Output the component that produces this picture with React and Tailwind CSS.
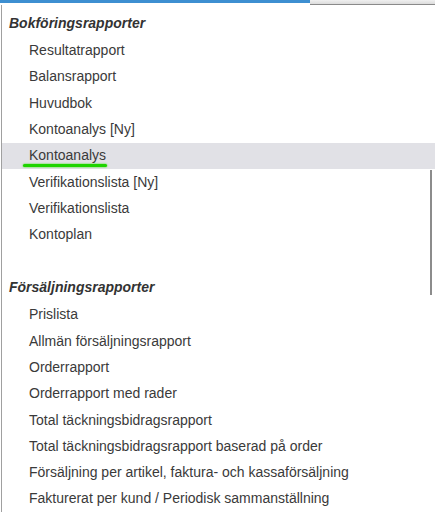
import React from 'react';

const groups = [
    {
        title: 'Bokföringsrapporter',
        items: [
            'Resultatrapport',
            'Balansrapport',
            'Huvudbok',
            'Kontoanalys [Ny]',
            'Kontoanalys',
            'Verifikationslista [Ny]',
            'Verifikationslista',
            'Kontoplan',
        ],
    },
    {
        title: 'Försäljningsrapporter',
        items: [
            'Prislista',
            'Allmän försäljningsrapport',
            'Orderrapport',
            'Orderrapport med rader',
            'Total täckningsbidragsrapport',
            'Total täckningsbidragsrapport baserad på order',
            'Försäljning per artikel, faktura- och kassaförsäljning',
            'Fakturerat per kund / Periodisk sammanställning',
        ],
    },
];

const App = () => {
    return (
        <div className="w-[435px] h-[520px] overflow-hidden bg-white relative font-['Liberation_Sans',Arial,sans-serif] text-[14px] text-[#3a3a3a]">
            {/* Top input edge */}
            <div className="flex h-[5px]">
                <div className="w-[310px] h-[3px] bg-[#3d8fd1]" />
                <div className="flex-1 h-[5px] bg-gradient-to-b from-[#f0f0f0] to-[#dcdcdc] border-b border-[#8a8a8a]" />
            </div>

            <div className="border-l border-[#a0a0a0] ml-[1px] pt-[5px]">
                {groups.map((group, gi) => (
                    <div key={group.title}>
                        {gi > 0 && <div className="h-[26.3px]" />}
                        <div className="h-[27.5px] flex items-center pl-[7px] font-bold italic text-[#333]">
                            {group.title}
                        </div>
                        {group.items.map((item, i) => {
                            const active = gi === 0 && i === 4;
                            return (
                                <div
                                    key={item}
                                    className={`h-[26.3px] flex items-center pl-[27px] ${active ? 'bg-[#e1e1e6]' : ''}`}
                                >
                                    <span className="relative">
                                        {item}
                                        {active && (
                                            <span className="absolute left-[-6px] right-[-1px] top-[19px] h-[3px] rounded-full bg-[#1ed400] shadow-[0_0_2px_#2be000]" />
                                        )}
                                    </span>
                                </div>
                            );
                        })}
                    </div>
                ))}
            </div>

            {/* scrollbar */}
            <div className="absolute right-[3px] top-[170px] w-[2px] h-[125px] bg-[#8c8c8c]" />
        </div>
    );
};

export default App;
